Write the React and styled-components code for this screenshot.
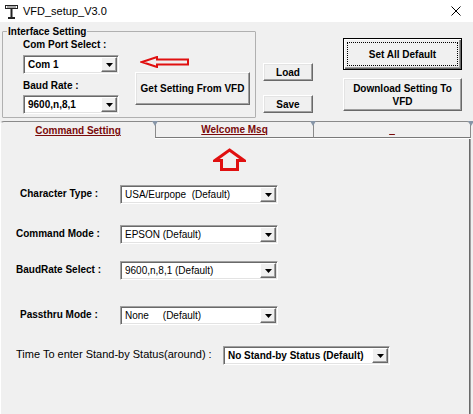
import React from "react"
import styled, { createGlobalStyle, css } from "styled-components"

const GlobalStyle = createGlobalStyle`
  html, body {
    margin: 0;
    padding: 0;
    background: #f0f0f0;
  }
  body {
    font-family: "Liberation Sans", Arial, sans-serif;
    color: #000;
  }
`

const Window = styled.div`
  width: 473px;
  height: 414px;
  overflow: hidden;
  background: #f0f0f0;
  display: flex;
  flex-direction: column;
`

const TitleBar = styled.div`
  height: 22px;
  flex-shrink: 0;
  background: #fff;
  display: flex;
  align-items: center;
  padding: 0 12px 0 5px;
  font-size: 11px;
`

const Title = styled.span`
  flex: 1;
  margin-left: 5px;
`

const TopArea = styled.div`
  height: 99px;
  flex-shrink: 0;
  display: flex;
  align-items: flex-start;
`

const GroupBox = styled.fieldset`
  box-sizing: border-box;
  width: 254px;
  height: 93px;
  margin: 3px 0 0 2px;
  padding: 0 0 0 4px;
  border: 1px solid #b0b0b0;
  border-radius: 1px;
`

const Legend = styled.legend`
  padding: 0 1px;
  font-size: 10px;
  font-weight: bold;
  line-height: 13px;
`

const GroupInner = styled.div`
  display: flex;
  gap: 16px;
  padding-left: 16px;
`

const Column = styled.div`
  display: flex;
  flex-direction: column;
  align-items: flex-start;
  margin-left: ${p => p.$left || 0}px;
`

const Caption = styled.div`
  font-size: 10px;
  font-weight: bold;
  line-height: 14px;
  margin-top: ${p => p.$top || 0}px;
`

const ComboBox = styled.div`
  box-sizing: border-box;
  width: ${p => p.$w}px;
  height: 19px;
  margin-top: ${p => p.$top || 0}px;
  display: flex;
  align-items: center;
  background: #fff;
  border-top: 1px solid #a0a0a0;
  border-left: 1px solid #a0a0a0;
  border-right: 1px solid #fff;
  border-bottom: 1px solid #fff;
  box-shadow: inset 1px 1px 0 #696969, inset -1px -1px 0 #e3e3e3;
`

const ComboText = styled.span`
  flex: 1;
  padding-left: 4px;
  font-size: 10px;
  font-weight: ${p => (p.$bold ? "bold" : "normal")};
  white-space: pre;
  overflow: hidden;
`

const DropButton = styled.div`
  box-sizing: border-box;
  width: 16px;
  height: 15px;
  margin-right: 1px;
  display: flex;
  align-items: center;
  justify-content: center;
  background: #f0f0f0;
  border: 1px solid;
  border-color: #fff #696969 #696969 #fff;
  box-shadow: inset -1px -1px 0 #a0a0a0;
`

const Button = styled.button`
  position: relative;
  box-sizing: border-box;
  width: ${p => p.$w}px;
  height: ${p => p.$h}px;
  margin-top: ${p => p.$top || 0}px;
  padding: 0;
  font-family: "Liberation Sans", Arial, sans-serif;
  font-size: 10px;
  font-weight: bold;
  line-height: 13px;
  color: #000;
  background: #f0f0f0;
  border: 1px solid;
  border-color: #fff #696969 #696969 #fff;
  box-shadow: inset -1px -1px 0 #a0a0a0, inset 1px 1px 0 #e3e3e3;
  ${p => p.$default && css`
    border: 1px solid #000;
    box-shadow: inset 1px 1px 0 #fff, inset -1px -1px 0 #696969, inset -2px -2px 0 #a0a0a0;
    &::after {
      content: "";
      position: absolute;
      inset: 3px;
      border: 1px dotted #000;
    }
  `}
`

const TabStrip = styled.div`
  width: 471px;
  height: 17px;
  flex-shrink: 0;
  display: flex;
`

const Tab = styled.div`
  position: relative;
  box-sizing: border-box;
  width: ${p => p.$w}px;
  display: flex;
  justify-content: center;
  padding-top: ${p => (p.$active ? 3 : 2)}px;
  font-size: 10px;
  font-weight: bold;
  line-height: 12px;
  color: #7a0a0a;
  text-decoration: underline;
  border-top: 1px solid #8a8a8a;
  border-left: 1px solid ${p => (p.$active ? "#fff" : "#8a8a8a")};
  border-bottom: ${p => (p.$active ? "none" : "1px solid #7a7a7a")};
  box-shadow: ${p => (p.$active ? "none" : "0 1px 0 #fff")};
  ${p => p.$active && css`border-top-left-radius: 4px;`}
  ${p => p.$last && css`
    border-right: 1px solid #8a8a8a;
    border-top-right-radius: 4px;
  `}
  ${p => !p.$active && css`
    &::before {
      content: "";
      position: absolute;
      top: -1px;
      left: -4px;
      border-left: 3px solid transparent;
      border-right: 3px solid transparent;
      border-top: 5px solid #8796a8;
    }
  `}
  ${p => p.$last && css`
    &::after {
      content: "";
      position: absolute;
      top: -1px;
      right: -4px;
      border-left: 3px solid transparent;
      border-right: 3px solid transparent;
      border-top: 5px solid #8796a8;
    }
  `}
`

const Panel = styled.div`
  flex: 1;
  width: 471px;
  box-sizing: border-box;
  border-left: 1px solid #fff;
  border-right: 1px solid #a0a0a0;
  box-shadow: inset -1px 0 0 #696969;
  display: flex;
  flex-direction: column;
`

const Row = styled.div`
  display: grid;
  grid-template-columns: ${p => p.$col}px auto;
  align-items: center;
  margin-top: ${p => p.$top}px;
`

const FieldLabel = styled.span`
  padding-left: ${p => p.$indent}px;
  padding-bottom: 3px;
  font-size: ${p => (p.$bold ? 10 : 11)}px;
  font-weight: ${p => (p.$bold ? "bold" : "normal")};
  white-space: nowrap;
`

const ArrowWrap = styled.div`
  margin: ${p => p.$top}px 0 0 ${p => p.$left}px;
  line-height: 0;
`

const Combo = ({ width, text, bold, top }) => (
  <ComboBox $w={width} $top={top}>
    <ComboText $bold={bold}>{text}</ComboText>
    <DropButton>
      <svg width="7" height="4" viewBox="0 0 7 4">
        <polygon points="0,0 7,0 3.5,4" fill="#000" />
      </svg>
    </DropButton>
  </ComboBox>
)

const PoleIcon = () => (
  <svg width="13" height="15" viewBox="0 0 13 15">
    <rect x="0.5" y="1.5" width="12" height="3" fill="#fff" stroke="#222" />
    <rect x="2" y="2.5" width="9" height="1" fill="#555" />
    <rect x="5.5" y="5" width="2" height="8" fill="#222" />
    <rect x="3" y="13" width="7" height="2" fill="#222" />
  </svg>
)

const CloseIcon = () => (
  <svg width="10" height="10" viewBox="0 0 10 10">
    <path d="M0.5 0.5 L9.5 9.5 M9.5 0.5 L0.5 9.5" stroke="#000" strokeWidth="1" />
  </svg>
)

const LeftArrow = () => (
  <svg width="50" height="12" viewBox="0 0 50 12">
    <polygon
      points="2,6 17,1 17,3.5 48,3.5 48,8.5 17,8.5 17,11"
      fill="none"
      stroke="#e01010"
      strokeWidth="2"
    />
  </svg>
)

const UpArrow = () => (
  <svg width="33" height="23" viewBox="0 0 33 23">
    <polygon
      points="16.5,2 31,12.5 24.5,12.5 24.5,21.5 8.5,21.5 8.5,12.5 2,12.5"
      fill="none"
      stroke="#e01010"
      strokeWidth="3"
      strokeLinejoin="miter"
    />
  </svg>
)

const settings = [
  { label: "Character Type :", indent: 19, top: 14, value: "USA/Eurpope  (Default)" },
  { label: "Command Mode :", indent: 15, top: 21, value: "EPSON (Default)" },
  { label: "BaudRate Select :", indent: 15, top: 17, value: "9600,n,8,1 (Default)" },
  { label: "Passthru Mode :", indent: 19, top: 26, value: "None     (Default)" },
]

const App = () => (
  <Window>
    <GlobalStyle />
    <TitleBar>
      <PoleIcon />
      <Title>VFD_setup_V3.0</Title>
      <CloseIcon />
    </TitleBar>

    <TopArea>
      <GroupBox>
        <Legend>Interface Setting</Legend>
        <GroupInner>
          <Column>
            <Caption>Com Port Select :</Caption>
            <Combo width={96} top={3} text="Com 1" bold />
            <Caption $top={5}>Baud Rate :</Caption>
            <Combo width={96} top={2} text="9600,n,8,1" bold />
          </Column>
          <Column>
            <ArrowWrap $top={18} $left={5}>
              <LeftArrow />
            </ArrowWrap>
            <Button $w={115} $h={33} $top={4}>Get Setting From VFD</Button>
          </Column>
        </GroupInner>
      </GroupBox>

      <Column $left={7}>
        <Button $w={50} $h={18} $top={41}>Load</Button>
        <Button $w={50} $h={18} $top={14}>Save</Button>
      </Column>

      <Column $left={30}>
        <Button $w={119} $h={32} $top={16} $default>Set All Default</Button>
        <Button $w={119} $h={33} $top={8}>Download Setting To<br />VFD</Button>
      </Column>
    </TopArea>

    <TabStrip>
      <Tab $w={155} $active>Command Setting</Tab>
      <Tab $w={158}>Welcome Msq</Tab>
      <Tab $w={158} $last>_</Tab>
    </TabStrip>

    <Panel>
      <ArrowWrap $top={10} $left={212}>
        <UpArrow />
      </ArrowWrap>
      {settings.map(s => (
        <Row key={s.label} $col={119} $top={s.top}>
          <FieldLabel $indent={s.indent} $bold>{s.label}</FieldLabel>
          <Combo width={158} text={s.value} />
        </Row>
      ))}
      <Row $col={222} $top={21}>
        <FieldLabel $indent={15}>Time To enter Stand-by Status(around) :</FieldLabel>
        <Combo width={167} text="No Stand-by Status (Default)" bold />
      </Row>
    </Panel>
  </Window>
)

export default App
